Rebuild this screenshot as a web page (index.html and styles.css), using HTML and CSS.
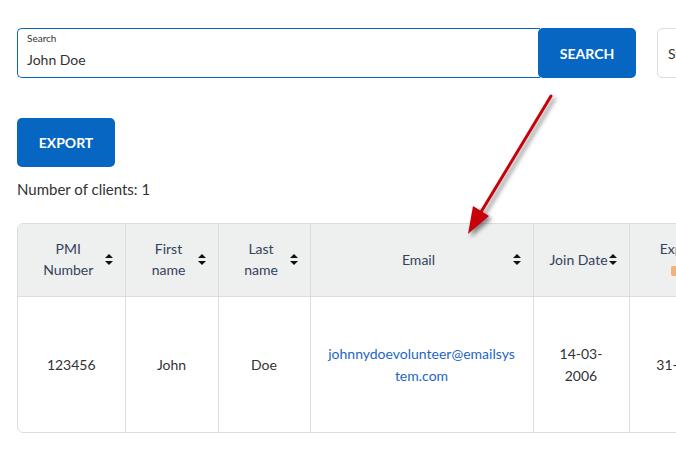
FILE: index.html
```html
<!DOCTYPE html>
<html>
<head>
<meta charset="utf-8">
<link rel="stylesheet" href="styles.css">
</head>
<body>
<div class="page">
  <div class="search-row">
    <div class="search-field">
      <span class="field-label">Search</span>
      <span class="field-value">John Doe</span>
    </div>
    <button class="btn search-btn">SEARCH</button>
    <div class="select">Status</div>
  </div>
  <button class="btn export-btn">EXPORT</button>
  <p class="count">Number of clients: 1</p>
  <div class="table-wrap">
    <table class="clients">
      <colgroup>
        <col class="c1"><col class="c2"><col class="c3"><col class="c4"><col class="c5"><col class="c6"><col class="c7">
      </colgroup>
      <thead>
        <tr>
          <th><div class="th-in"><span class="th-text">PMI Number</span><span class="sort"></span></div></th>
          <th><div class="th-in"><span class="th-text">First name</span><span class="sort"></span></div></th>
          <th><div class="th-in"><span class="th-text">Last name</span><span class="sort"></span></div></th>
          <th><div class="th-in"><span class="th-text">Email</span><span class="sort"></span></div></th>
          <th><div class="th-in tight"><span class="th-text">Join Date</span><span class="sort"></span></div></th>
          <th><div class="th-in"><span class="th-text">Expiration<br><span class="warn"></span></span><span class="sort"></span></div></th>
          <th><div class="th-in"><span class="th-text">Status</span><span class="sort"></span></div></th>
        </tr>
      </thead>
      <tbody>
        <tr>
          <td>123456</td>
          <td>John</td>
          <td>Doe</td>
          <td><a class="mail" href="#">johnnydoevolunteer@emailsystem.com</a></td>
          <td>14-03-2006</td>
          <td class="nowrap">31-12-2024</td>
          <td>Active</td>
        </tr>
      </tbody>
    </table>
  </div>
  <svg class="arrow" width="120" height="160" viewBox="0 0 120 160">
    <line x1="104" y1="8" x2="34" y2="124" stroke="#c8000a" stroke-width="3" stroke-linecap="round"/>
    <polygon points="21,146 26,118 42,128" fill="#c8000a"/>
  </svg>
</div>
</body>
</html>
```
FILE: styles.css
```css
html, body {
  margin: 0;
  padding: 0;
  background: #ffffff;
  overflow: hidden;
}
body {
  font-family: Lato, "Open Sans", "Liberation Sans", sans-serif;
  color: #333333;
  width: 676px;
  height: 454px;
}
.page {
  position: relative;
  padding: 28px 0 0 17px;
  width: 1100px;
}
.search-row {
  display: flex;
  align-items: stretch;
  height: 50px;
}
.search-field {
  box-sizing: border-box;
  width: 523px;
  border: 1px solid #0b66c2;
  border-right: none;
  border-radius: 5px 0 0 5px;
  display: flex;
  flex-direction: column;
  padding: 3px 0 0 9px;
}
.field-label {
  font-size: 10px;
  line-height: 12px;
  color: #333;
}
.field-value {
  font-size: 14px;
  line-height: 18px;
  margin-top: 7px;
  color: #333;
}
.btn {
  font-family: Lato, "Open Sans", "Liberation Sans", sans-serif;
  background: #0666c2;
  color: #fff;
  border: none;
  border-radius: 5px;
  font-weight: 700;
  font-size: 14px;
  letter-spacing: 0;
  cursor: pointer;
}
.search-btn {
  width: 98px;
  margin-left: -2px;
  padding: 0;
}
.select {
  box-sizing: border-box;
  margin-left: 21px;
  width: 180px;
  border: 1px solid #dddddd;
  border-radius: 5px;
  font-size: 14px;
  display: flex;
  align-items: center;
  padding-left: 10px;
  color: #333;
}
.export-btn {
  display: block;
  margin-top: 40px;
  width: 98px;
  height: 49px;
  padding: 0;
}
.count {
  margin: 12px 0 0 0;
  font-size: 15px;
  line-height: 20px;
  color: #333;
}
.table-wrap {
  margin-top: 24px;
  width: 964px;
  border: 1px solid #dddddd;
  border-radius: 6px;
  overflow: hidden;
}
.clients {
  border-collapse: collapse;
  table-layout: fixed;
  width: 100%;
  font-size: 14px;
}
.c1 { width: 107px; }
.c2 { width: 93px; }
.c3 { width: 92px; }
.c4 { width: 223px; }
.c5 { width: 96px; }
.c6 { width: 130px; }
.c7 { width: 223px; }
.clients th {
  background: #eeefef;
  font-weight: 400;
  color: #34425a;
  height: 70px;
  padding: 0 0 2px 0;
  border-left: 1px solid #dddddd;
  border-bottom: 1px solid #dddddd;
}
.clients th:first-child, .clients td:first-child { border-left: none; }
.th-in {
  display: flex;
  align-items: center;
  padding: 0 12px 0 16px;
}
.th-in.tight { padding: 0 12px 0 15px; }
.th-in.tight .th-text { white-space: nowrap; }
.th-in.tight .sort { margin-left: 0; }
.th-text {
  flex: 1;
  text-align: center;
  line-height: 21px;
}
.sort {
  width: 8px;
  height: 11px;
  margin-left: 2px;
  position: relative;
  flex: none;
}
.sort::before, .sort::after {
  content: "";
  position: absolute;
  left: 0;
  border-left: 4px solid transparent;
  border-right: 4px solid transparent;
}
.sort::before {
  top: 0;
  border-bottom: 4px solid #111;
}
.sort::after {
  bottom: 0;
  border-top: 4px solid #111;
}
.warn {
  display: inline-block;
  width: 40px;
  height: 10px;
  background: #f3b27a;
  border-radius: 2px;
  vertical-align: middle;
}
.clients td {
  height: 135px;
  padding: 0 16px;
  text-align: center;
  border-left: 1px solid #dddddd;
  line-height: 22px;
  color: #333;
  word-wrap: break-word;
}
.clients td.nowrap { white-space: nowrap; }
.mail {
  color: #1d66c6;
  text-decoration: none;
  word-break: break-all;
}
.arrow {
  position: absolute;
  left: 447px;
  top: 88px;
  overflow: visible;
  filter: drop-shadow(3px 3px 2px rgba(0,0,0,0.45));
}
```
